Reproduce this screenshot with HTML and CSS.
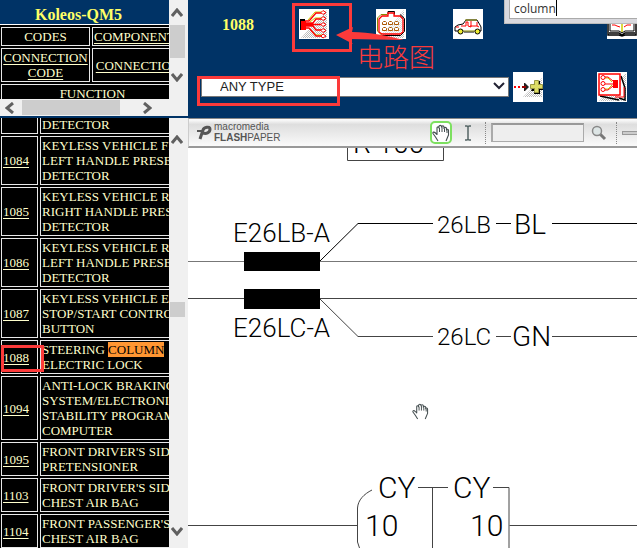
FILE: index.html
```html
<!DOCTYPE html>
<html lang="en">
<head>
<meta charset="utf-8">
<title>Koleos-QM5</title>
<link rel="stylesheet" href="styles.css">
</head>
<body>
<svg class="defs" aria-hidden="true">
  <defs>
    <pattern id="dots" width="2" height="2" patternUnits="userSpaceOnUse"><path fill="#bbb" d="M0 0h1v1H0zM1 1h1v1H1z"/></pattern>
    <symbol id="hand" viewBox="0 0 18 18">
      <path fill="#fff" stroke="#444e50" stroke-width="1.1" stroke-linejoin="round" d="M6 17 3.500 13 1 9.500C.5 8 2 7.500 3.500 9L5 10.500V4C5 2.500 7 2.500 7 4V2.500C7 1 9.500 1 9.500 2.500V3C9.500 1.500 12 1.500 12 3V4.500C12 3 14.500 3 14.500 4.500V6C14.500 5 16.500 5 16.500 6.500V11L14 17"/>
      <path fill="none" stroke="#444e50" d="M7.500 4v4M10 3v5M12.500 4.500V8M15 6v3"/>
    </symbol>
  </defs>
</svg>
<div class="app">
  <aside class="side">
    <section class="index-frame">
      <div class="index-view">
        <div class="index-content">
          <h1>Koleos-QM5</h1>
          <table class="grid tabs">
            <tr><td class="first">CODES</td><td><a href="#">COMPONENTS</a></td></tr>
            <tr><td><a href="#">CONNECTION CODE</a></td><td><a href="#">CONNECTION</a></td></tr>
            <tr><td colspan="2">FUNCTION</td></tr>
          </table>
        </div>
        <div class="hbar">
          <svg width="9" height="12"><path d="M8 1 2 6l6 5"/></svg>
          <span class="hthumb"></span>
          <svg width="9" height="12"><path d="M1 1l6 5-6 5"/></svg>
        </div>
      </div>
      <div class="vbar vbar-index">
        <svg width="12" height="9"><path d="M1 8l5-6 5 6"/></svg>
        <span class="vthumb"></span>
        <svg width="12" height="9"><path d="M1 1l5 6 5-6"/></svg>
      </div>
    </section>
    <section class="list-frame">
      <div class="list-view">
        <table class="grid codes">
          <tr class="cut"><td></td><td>DETECTOR</td></tr>
          <tr><td><a href="#">1084</a></td><td>KEYLESS VEHICLE FRONT<br>LEFT HANDLE PRESENCE<br>DETECTOR</td></tr>
          <tr><td><a href="#">1085</a></td><td>KEYLESS VEHICLE REAR<br>RIGHT HANDLE PRESENCE<br>DETECTOR</td></tr>
          <tr><td><a href="#">1086</a></td><td>KEYLESS VEHICLE REAR<br>LEFT HANDLE PRESENCE<br>DETECTOR</td></tr>
          <tr><td><a href="#">1087</a></td><td>KEYLESS VEHICLE ENGINE<br>STOP/START CONTROL<br>BUTTON</td></tr>
          <tr><td class="marked"><a href="#">1088</a></td><td>STEERING <mark>COLUMN</mark><br>ELECTRIC LOCK</td></tr>
          <tr><td><a href="#">1094</a></td><td>ANTI-LOCK BRAKING<br>SYSTEM/ELECTRONIC<br>STABILITY PROGRAM<br>COMPUTER</td></tr>
          <tr><td><a href="#">1095</a></td><td>FRONT DRIVER'S SIDE<br>PRETENSIONER</td></tr>
          <tr><td><a href="#">1103</a></td><td>FRONT DRIVER'S SIDE<br>CHEST AIR BAG</td></tr>
          <tr><td><a href="#">1104</a></td><td>FRONT PASSENGER'S<br>CHEST AIR BAG</td></tr>
        </table>
      </div>
      <div class="vbar vbar-list">
        <svg width="12" height="9"><path d="M1 8l5-6 5 6"/></svg>
        <span class="vthumb"></span>
        <svg width="12" height="9"><path d="M1 1l5 6 5-6"/></svg>
      </div>
    </section>
  </aside>

  <main class="main">
    <header class="head">
      <div class="tools">
        <strong class="code">1088</strong>
        <button class="tool" aria-label="Wiring diagram">
          <svg viewBox="0 0 30 30"><path fill="url(#dots)" d="M2 29 28 1v28z"/>
            <g fill="none" stroke="#cc0" stroke-width="1"><path d="M9 11 16 3h7M11 13l5-4h7M11 20l6 6h6"/></g>
            <g fill="none" stroke="red" stroke-width="1.300"><path d="M5 12h5l7-8h6M5 14h9l3-4h6M5 15.500h18M5 17h9l3 4h6M5 19h5l7 8h6"/></g>
            <path d="M1 10h5v11H1z"/><path fill="red" d="M2 12h5v9H2z"/>
            <g fill="#fff" stroke="red"><path d="M22 3.500l2-2 3 2-3 2zM22 9.500l2-2 3 2-3 2zM22 15.500l2-2 3 2-3 2zM22 21.500l2-2 3 2-3 2zM22 27l2-2 3 2-3 2z"/></g></svg>
        </button>
        <button class="tool" aria-label="Connector">
          <svg viewBox="0 0 30 30"><path fill="url(#dots)" d="M2 29 28 1v28z"/>
            <path fill="none" stroke="#000" stroke-width="1" d="M12 5.500V2.500h6.500v3M24 5.500l4.500 4v13l-4 4H6"/>
            <path fill="none" stroke="#880" stroke-width="1" d="M11 5.500H5L1.500 9v13L6 26.500"/>
            <path fill="#fff" fill-opacity=".5" stroke="red" stroke-width="1.300" d="M12 7V4h6v3h6l3 3v13l-3 2H6l-3-2V10l3-3z"/>
            <g fill="#fff" stroke="#a50" stroke-width="1"><path d="M6.500 15.500v-2l1-1h2l1 1v2zM12.500 15.500v-2l1-1h2l1 1v2zM18.500 15.500v-2l1-1h2l1 1v2zM6.500 21.500v-2l1-1h2l1 1v2zM12.500 21.500v-2l1-1h2l1 1v2zM18.500 21.500v-2l1-1h2l1 1v2z"/></g></svg>
        </button>
        <button class="tool" aria-label="Vehicle">
          <svg viewBox="0 0 30 30">
            <path fill="none" stroke="#000" d="M5 22H2v-4l3-2 5-1 3-4h11l3 5 1 2v4h-2M11 23h10"/>
            <path fill="none" stroke="#880" d="M12 11h12M10 22h12"/>
            <path fill="none" stroke="red" d="M3 18h3M8 17h5v-4h2v4l3 1v-6M17 17h7v-4M24 17l2 1"/>
            <g fill="#ee3" stroke="#000"><circle cx="7.500" cy="22.500" r="2.500"/><circle cx="24.500" cy="22.500" r="2.500"/></g></svg>
        </button>
        <button class="tool tool-book" aria-label="Manual">
          <svg viewBox="0 0 30 30">
            <path fill="#fff" stroke="#000" d="M3 3v19h9l3 2 3-2h9V3h-9l-3 2-3-2z"/>
            <path fill="none" stroke="#000" stroke-width="1.500" d="M1 5v21h11l3 1 3-1h11V5M2 24h10l3 2 3-2h10"/>
            <path fill="none" stroke="red" d="M5 16h3l2 1 3 1M17 18l3-2h4M5 10h6M18 10h6"/>
            <path stroke="#cc0" stroke-width="1.500" d="M15 6v17"/></svg>
        </button>
      </div>
      <div class="filter">
        <div class="pick">
          <select aria-label="Type"><option>ANY TYPE</option></select>
          <svg class="pick-arrow" width="12" height="9"><path d="M1 1l5 5 5-5"/></svg>
        </div>
        <button class="tool" aria-label="Add">
          <svg viewBox="0 0 30 30"><path fill="url(#dots)" d="M10 25 29 6v19z"/>
            <path fill="red" d="M1 14h2v2H1zM5 14h2v2H5z"/><path fill="#222" d="M11 11h1l4 4-4 4h-1z"/><path fill="#900" d="M9 14h4v2H9z"/>
            <path d="M22 9h5v5h3v4h-3v4h-6v-3h-3"/><path fill="#dd6" stroke="#994" d="M21.500 8.500h4v4h4v4h-4v4h-4v-4h-4v-4h4z"/></svg>
        </button>
        <button class="tool tool-cards" aria-label="Diagram cards">
          <svg viewBox="0 0 30 30"><path fill="url(#dots)" d="M2 29 29 1v28z"/>
            <path fill="#fff" stroke="#000" stroke-width="1.500" d="M24 4l4 12v12l-6-2M3 24l19 4"/>
            <path fill="none" stroke="red" d="M18 25h9V15"/>
            <path fill="#fff" stroke="red" stroke-width="1.500" d="M2 2h21v21H2z"/>
            <path fill="none" stroke="#cc0" d="M7 6h4l4 4M7 17h4l4-4"/>
            <path fill="none" stroke="red" d="M7 5h4l5 4M7 12h10M7 18h4l5-4"/>
            <g fill="#fff" stroke="red"><circle cx="6" cy="5.500" r="2"/><circle cx="6" cy="11.500" r="2"/><circle cx="6" cy="17.500" r="2"/></g>
            <path fill="red" d="M16 8h5v8h-5z"/></svg>
        </button>
      </div>
      <div class="find"><input type="text" value="column" aria-label="Find"><i class="caret"></i></div>
      <i class="box box-icon"></i>
      <i class="box box-select"></i>
      <svg class="arrow" width="72" height="20"><path fill="#fc3a3a" d="M0 8 17 0l-1 5c18 0 36 4 52 8L13 12l4 5z"/></svg>
      <span class="note" lang="zh">电路图</span>
    </header>

    <div class="paperbar">
      <div class="brand">
        <svg width="17" height="15" viewBox="0 0 17 15"><path fill="none" stroke="#555" stroke-width="3" d="M4 14 7 5c1-3 7-4 7-1 0 4-4 5-7 4"/><path fill="#555" d="M1 5h5v2H1z"/></svg>
        <div class="brand-text"><span class="maker">macromedia</span><span><b>FLASH</b>PAPER</span></div>
      </div>
      <button class="hand-btn" aria-label="Pan"><svg width="18" height="18"><use href="#hand"/></svg></button>
      <button class="text-btn" aria-label="Select text"><svg width="8" height="16"><path fill="none" stroke="#566" stroke-width="1.500" d="M1 1h2l1 1 1-1h2M4 2v12M1 15h2l1-1 1 1h2"/></svg></button>
      <i class="sep"></i>
      <input class="search" type="text" aria-label="Search">
      <button class="search-btn" aria-label="Find text"><svg width="16" height="16"><path stroke="#777" stroke-width="3" d="M9 9l5 5"/><circle cx="6" cy="6" r="4.500" fill="#dde5e5" stroke="#888" stroke-width="1.500"/></svg></button>
      <i class="sep sep-end"></i>
      <i class="track"></i>
    </div>

    <div class="paper">
      <svg class="diagram" width="100%" height="100%">
        <g transform="translate(-188 -148)">
          <path class="wire" d="M347.500 148v12.500h96V148"/>
          <path class="wire" d="M188 298.500h449M320 299l38 37.500h75M552 336.500h85M496 336.500h15"/>
          <path class="wire dark" d="M320 261l38-37.500h75M552 223.500h85M496 223.500h15"/>
          <path class="wire soft" d="M188 261.500h449"/>
          <path d="M244 252h76v19h-76zM244 289h76v20h-76z"/>
          <path class="wire" d="M188 525.500h169.500M509.500 525.500H637M418 487.500h30M493 487.500h16v60.500M372 490c-8 4-14 10-14.500 18v34l2 6"/>
          <path class="wire" d="M432.500 487v61"/>
          <g class="t28"><text x="353" y="153">R 100</text><text x="514" y="234">BL</text><text x="512" y="346">GN</text></g>
          <g class="t26"><text x="233" y="242">E26LB-A</text><text x="233" y="337">E26LC-A</text></g>
          <g class="t24"><text x="437" y="233">26LB</text><text x="437" y="345">26LC</text></g>
          <g class="t30"><text x="378" y="498">CY</text><text x="453" y="498">CY</text><text x="365" y="536">10</text><text x="470" y="536">10</text></g>
          <use href="#hand" x="412" y="403" width="17" height="17"/>
        </g>
      </svg>
    </div>
  </main>
</div>
</body>
</html>
```

FILE: styles.css
```css
* { box-sizing: border-box; }
body { margin: 0; font-family: "Liberation Serif", serif; font-size: 13px; line-height: 15px; background: #fff; }
button { padding: 0; border: 0; background: none; }
.defs { position: absolute; width: 0; height: 0; }
.app { display: flex; height: 100vh; overflow: hidden; }

.side { flex: 0 0 188px; min-width: 0; display: flex; flex-direction: column; background: #f0f0f0; }
.index-frame { display: flex; flex: 0 0 118px; min-height: 0; height: 118px; border-bottom: 2px solid #003366; }
.index-view { flex: 1; min-width: 0; display: flex; flex-direction: column; }
.index-content { flex: 1; min-height: 0; overflow: hidden; background: #000; }
.index-content h1 { margin: 0; width: 185px; height: 25px; padding: 6px 28px 0 0; border-bottom: 1px solid #fff; background: #003366; color: #ffff66; font-size: 16px; line-height: 18px; text-align: center; }

.grid { border-collapse: separate; border-spacing: 2px; color: #ffffcc; background: #000; }
.grid td { border: 1px solid #e8e8e8; padding: 1px; }
.grid a { color: inherit; text-underline-offset: 2px; }
.tabs { width: 187px; margin-left: -1px; text-align: center; table-layout: fixed; }
.tabs .first { width: 89px; }
.list-frame { flex: 1; min-height: 0; display: flex; }
.list-view { flex: 1; min-width: 0; overflow: hidden; background: #000; }
.codes { width: 240px; margin: -3px 0 0 -1px; table-layout: fixed; white-space: nowrap; }
.codes td:first-child { width: 37px; }
.codes .cut td { border-top: 0; padding-top: 0; }
mark { background: #ff9632; color: #000; }
.marked { position: relative; }
.marked::after { content: ""; position: absolute; left: -1px; right: -7px; top: 4px; bottom: 1px; border: 3px solid #fc3a3a; }

.vbar { flex: 0 0 19px; display: flex; flex-direction: column; align-items: center; padding-right: 3px; background: #f0f0f0; }
.vbar path, .hbar path { fill: none; stroke: #606060; stroke-width: 3; }
.vthumb { width: 15px; background: #cdcdcd; }
.vbar-index { padding-top: 8px; padding-bottom: 34px; }
.vbar-index .vthumb { height: 33px; margin: 8px 0 auto; }
.vbar-list { padding-top: 17px; padding-bottom: 12px; }
.vbar-list .vthumb { height: 15px; margin: 158px 0 auto; }
.hbar { flex: 0 0 17px; display: flex; align-items: center; padding-left: 5px; background: #f0f0f0; }
.hthumb { width: 98px; height: 15px; margin: 0 23px 0 8px; background: #cdcdcd; }

.main { flex: 1; min-width: 0; display: flex; flex-direction: column; }
.head { position: relative; padding-top: 9px; height: 118px; background: #003366; overflow: hidden; }
.tools { display: grid; grid-template-columns: repeat(6, 77px); padding-left: 34px; align-items: center; }
.code { color: #ffff66; font-size: 16px; }
.tool { width: 30px; height: 30px; flex: none; background: #fff; }
.tool svg { display: block; width: 30px; height: 30px; }
.tool-book { grid-column: 6; }
.filter { display: flex; align-items: center; margin-top: 33px; padding-left: 13px; }
.pick { position: relative; flex: 0 0 308px; margin-right: 4px; }
.pick select { display: block; appearance: none; width: 100%; height: 20px; padding: 0 18px; border: 1px solid #777; border-radius: 0; background: #fff; color: #222; font: 13px/16px "Liberation Sans", sans-serif; }
.pick-arrow { position: absolute; right: 4px; top: 5px; }
.pick-arrow path { fill: none; stroke: #223; stroke-width: 2; }
.tool-cards { margin-left: 54px; }
.find { position: absolute; left: 316px; right: 0; top: 0; height: 24px; padding: 0 0 4px 4px; background: #d9d9de; border: 1px solid #bbb; border-width: 0 0 1px 1px; }
.find input { display: block; width: 100%; height: 19px; padding: 0 4px 2px; border: 1px solid #aaa; border-width: 0 0 1px 1px; background: #fff; color: #333; font: 12px/14px "Open Sans", sans-serif; }
.caret { position: absolute; left: 51px; top: 0; width: 1px; height: 16px; background: #000; }
.box { position: absolute; border: 3px solid #fc3a3a; }
.box-icon { left: 104px; top: 3px; width: 60px; height: 49px; }
.box-select { left: 9px; top: 76px; width: 143px; height: 30px; }
.arrow { position: absolute; left: 148px; top: 27px; }
.note { position: absolute; left: 169px; top: 41px; color: #fc3a3a; font: 300 26px/30px "Noto Sans CJK SC", sans-serif; }

.paperbar { flex: 0 0 30px; display: flex; align-items: center; padding-left: 7px; border-top: 1px solid #888; border-bottom: 2px solid #999; border-left: 1px solid #ccc; background: linear-gradient(#fff, #dedede 20%, #fafafa); overflow: hidden; }
.brand { display: flex; align-items: center; gap: 1px; flex: 0 0 234px; color: #555; font-family: "Liberation Sans", sans-serif; }
.brand-text { display: flex; flex-direction: column; font-size: 10px; line-height: 11px; }
.brand-text .maker { line-height: 10px; }
.hand-btn { display: grid; place-items: center; flex: 0 0 22px; height: 23px; border: 2px solid #7de060; border-radius: 5px; background: #fff; }
.text-btn { flex: none; margin-left: 12px; height: 16px; }
.text-btn svg, .search-btn svg { display: block; }
.sep { flex: none; height: 22px; border-left: 1px dotted #888; margin: 0 5px 0 13px; }
.search { flex: 0 0 93px; width: 93px; min-width: 0; height: 19px; border: 1px solid #aaa; border-top: 2px solid #999; border-left-width: 2px; background: #eee; }
.search-btn { flex: none; margin-left: 7px; }
.sep-end { margin-left: 9px; }
.track { flex: 1; height: 4px; border: 1px solid #999; border-right: 0; background: #ccc; }

.paper { flex: 1; min-height: 0; overflow: hidden; background: #fff; }
.diagram { display: block; font-family: Roboto, sans-serif; font-weight: 300; }
.wire { fill: none; stroke: #444; stroke-width: 1; }
.dark { stroke: #000; }
.soft { stroke: #777; stroke-width: 1; }
.t24 { font-size: 24px; }
.t26 { font-size: 26px; }
.t28 { font-size: 28px; }
.t30 { font-size: 30px; }
```
